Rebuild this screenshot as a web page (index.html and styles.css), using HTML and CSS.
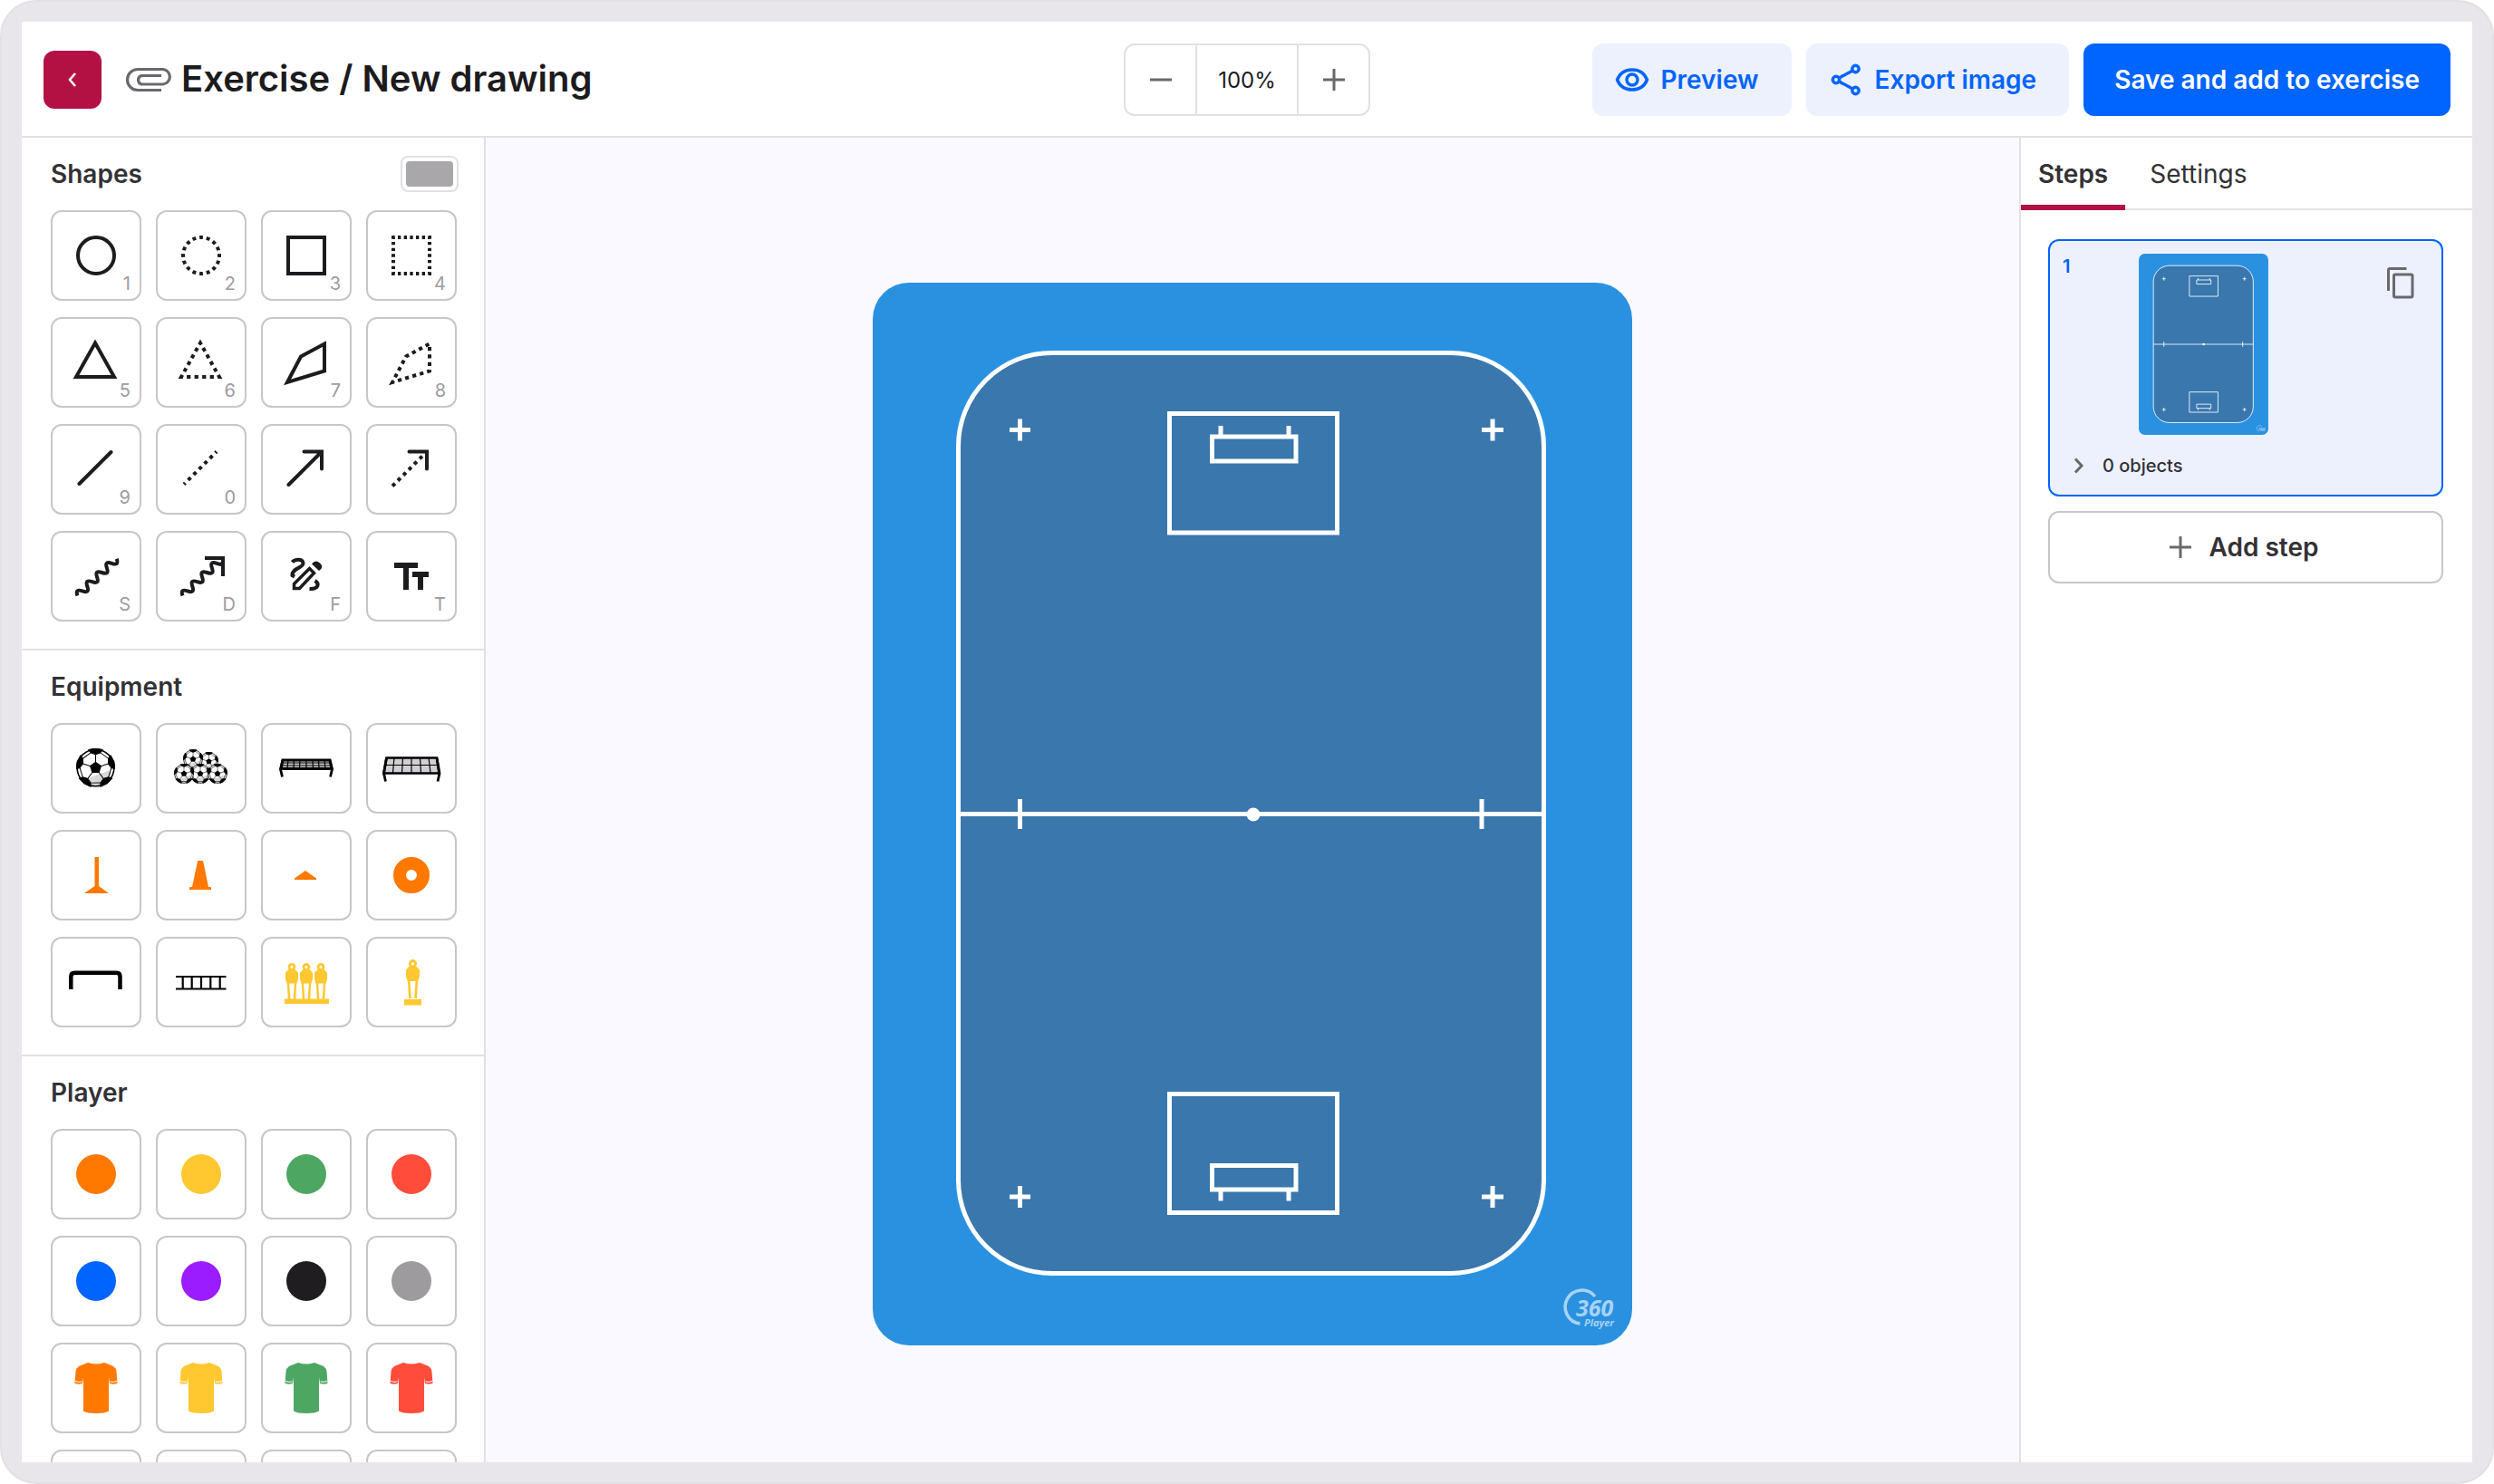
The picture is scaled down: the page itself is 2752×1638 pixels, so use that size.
FILE: index.html
```html
<!DOCTYPE html>
<html lang="en">
<head>
<meta charset="utf-8">
<meta name="viewport" content="width=device-width, initial-scale=1">
<title>Exercise / New drawing</title>
<link rel="stylesheet" href="styles.css">
</head>
<body>
<svg class="sprite" aria-hidden="true">
  <symbol id="ball" viewBox="-22 -22 44 44">
    <circle r="21" fill="#fff"/>
    <path d="M-7 11L15 3L18 6L15 14L6 20L-6 20Z" fill="#d9d7db"/>
    <path d="M0-7L6.700-2.200L4.100 5.700L-4.100 5.700L-6.700-2.200Z" fill="#000"/>
    <g id="seg" stroke="#000" stroke-width="1"><path d="M0-6V-15"/><path d="M0-15L-5.500-17L-8-20.500L0-22L8-20.500L5.500-17Z"/><path d="M5.500-17L14.500-10.500"/></g>
    <use href="#seg" transform="rotate(72)"/><use href="#seg" transform="rotate(144)"/><use href="#seg" transform="rotate(216)"/><use href="#seg" transform="rotate(288)"/>
    <circle r="20.800" fill="none" stroke="#000" stroke-width="1.600"/>
  </symbol>
  <symbol id="dummy" viewBox="-10 0 20 48">
    <path fill-rule="evenodd" d="M0 0a4.500 4.500 0 0 1 3.600 7.300L7.500 11.500V19L5.500 25L4.500 43H1.700L3 24H-3L-1.700 43H-4.500L-5.500 25L-7.500 19V11.500L-3.600 7.300A4.500 4.500 0 0 1 0 0ZM0 3a1.700 1.700 0 1 0 0 3.400A1.700 1.700 0 0 0 0 3Z"/>
  </symbol>
  <symbol id="shirt" viewBox="2 2 96 96">
    <path d="M41 22Q50 25 59 22L69 26Q72 28 72.500 32L73.500 45Q69 46.500 65 45L64 38V75.500Q60 78 50 78T36 75.500V38L35 45Q31 46.500 26.500 45L27.500 32Q28 28 31 26Z"/>
    <path d="M27 42.500Q31 44 34.500 43M73 42.500Q69 44 65.500 43" fill="none" stroke="#fff" stroke-width="1"/>
  </symbol>
  <symbol id="dot" viewBox="2 2 96 96"><circle cx="50" cy="50" r="22"/></symbol>
  <symbol id="pitch" viewBox="0 0 838 1173">
    <rect width="838" height="1173" rx="40" fill="#2a91e1"/>
    <g fill="none" stroke="#fff" stroke-width="5">
      <rect x="94.500" y="77.500" width="646" height="1016" rx="103" fill="#3977ad"/>
      <path d="M94 586.500H741M162.500 570V603M672 570V603"/>
      <path d="M151 162.500H174M162.500 150.500V174.500M672 162.500H696M684 150.500V174.500M151 1009H174M162.500 997V1021M672 1009H696M684 997V1021"/>
      <path d="M327.500 144.500H512.500V276H327.500ZM374.500 170H467V197H374.500ZM384 158V170M459 158V170"/>
      <path d="M327.500 895.500H512.500V1026.500H327.500ZM374.500 974.500H467V1001H374.500ZM384 1001V1013.500M459 1001V1013.500"/>
    </g>
    <circle cx="420" cy="587" r="7.500" fill="#fff"/>
    <path d="M797 1119A18.500 18.500 0 1 0 780.500 1149" fill="none" stroke="#a9d3f3" stroke-width="3.500"/>
    <text class="logo-360" x="776" y="1141">360</text>
    <text class="logo-player" x="785" y="1152">Player</text>
  </symbol>
</svg>

<div class="frame">
<div class="app">
  <header class="topbar">
    <div class="topbar-left">
      <button class="back" aria-label="Back"><svg viewBox="0 0 64 64"><path d="M35 25L29 32L35 39" fill="none" stroke="#fff" stroke-width="2.500"/></svg></button>
      <svg class="clip" viewBox="0 0 52 28" aria-hidden="true"><path d="M40 25.500H14A11.500 11.500 0 0 1 14 2.500H42A8.300 8.300 0 0 1 42 19H18A5 5 0 0 1 18 9.500H40" fill="none" stroke="#6a686c" stroke-width="3.200"/></svg>
      <h1>Exercise / New drawing</h1>
    </div>
    <div class="zoom" role="group" aria-label="Zoom">
      <button aria-label="Zoom out"><svg viewBox="0 0 24 24"><path d="M0 12H24"/></svg></button>
      <output>100%</output>
      <button aria-label="Zoom in"><svg viewBox="0 0 24 24"><path d="M0 12H24M12 0V24"/></svg></button>
    </div>
    <div class="actions">
      <button class="btn soft"><svg viewBox="0 0 40 40"><path d="M3.500 20C6.500 12.500 12.500 9 20 9S33.500 12.500 36.500 20C33.500 27.500 27.500 31 20 31S6.500 27.500 3.500 20Z"/><circle cx="20" cy="20" r="6"/></svg>Preview</button>
      <button class="btn soft"><svg viewBox="0 0 40 40"><circle cx="30.500" cy="8" r="3.700"/><circle cx="9" cy="20" r="3.700"/><circle cx="30.500" cy="32" r="3.700"/><path d="M12.300 18L27.300 10M12.300 22L27.300 30"/></svg>Export image</button>
      <button class="btn primary">Save and add to exercise</button>
    </div>
  </header>

  <div class="body">
    <aside class="tools">
      <section>
        <div class="head"><h2>Shapes</h2><input type="color" value="#a9a7aa" aria-label="Shape colour"></div>
        <div class="grid shapes">
          <button aria-label="Circle"><svg viewBox="2 2 96 96"><circle cx="50" cy="50" r="20"/></svg><kbd>1</kbd></button>
          <button aria-label="Dotted circle"><svg viewBox="2 2 96 96"><circle cx="50" cy="50" r="20" pathLength="128" stroke-dasharray="4 4" stroke-dashoffset="2"/></svg><kbd>2</kbd></button>
          <button aria-label="Square"><svg viewBox="2 2 96 96"><path d="M30 30H70V70H30Z"/></svg><kbd>3</kbd></button>
          <button aria-label="Dotted square"><svg viewBox="2 2 96 96"><path d="M30 30H70V70H30Z" pathLength="168" stroke-dasharray="3.500 3.500" stroke-dashoffset="1.750"/></svg><kbd>4</kbd></button>
          <button aria-label="Triangle"><svg viewBox="2 2 96 96"><path d="M49 28.500L70 66H28Z"/></svg><kbd>5</kbd></button>
          <button aria-label="Dotted triangle"><svg viewBox="2 2 96 96"><path d="M49 28.500L70 66H28Z" pathLength="120" stroke-dasharray="4 4" stroke-dashoffset="2"/></svg><kbd>6</kbd></button>
          <button aria-label="Polygon"><svg viewBox="2 2 96 96"><path d="M29 72L44 43.500L70 29.500V59.500Z"/></svg><kbd>7</kbd></button>
          <button aria-label="Dotted polygon"><svg viewBox="2 2 96 96"><path d="M29 72L44 43.500L70 29.500V59.500Z" pathLength="128" stroke-dasharray="4 4" stroke-dashoffset="2"/></svg><kbd>8</kbd></button>
          <button aria-label="Line"><svg viewBox="2 2 96 96"><path d="M31.500 66L66.500 31" stroke-linecap="round"/></svg><kbd>9</kbd></button>
          <button aria-label="Dotted line"><svg viewBox="2 2 96 96"><path d="M31 66.500L67 30.500" stroke-dasharray="4 4.500" stroke-dashoffset="2"/></svg><kbd>0</kbd></button>
          <button aria-label="Arrow"><svg viewBox="2 2 96 96"><path d="M30.500 67L66 31.500M47.500 30.500H67V49.500" stroke-linecap="round"/></svg></button>
          <button aria-label="Dotted arrow"><svg viewBox="2 2 96 96"><path d="M29 68.500L64 33.500" stroke-dasharray="4 4.500"/><path d="M47.500 30.500H67V49.500" stroke-linecap="round"/></svg></button>
          <button aria-label="Wavy line"><svg viewBox="2 2 96 96"><path d="M29.500 71.500q-2.900-8 5.400-5.100t5.400-5.100t5.400-5.100t5.400-5.100t5.400-5.100t5.400-5.100t5.400-5.100t5.400-5.100"/></svg><kbd>S</kbd></button>
          <button aria-label="Wavy arrow"><svg viewBox="2 2 96 96"><path d="M29.500 71.500q-2.900-8 5.400-5.100t5.400-5.100t5.400-5.100t5.400-5.100t5.400-5.100t5.400-5.100t5.400-5.100t4-1M54 30H74V50"/></svg><kbd>D</kbd></button>
          <button aria-label="Freehand"><svg viewBox="2 2 96 96"><path d="M34.500 34.500C37 31 46 30 46.500 35.500C47 41 34 41 34.500 49L37 50.500M59.500 55C64.500 58 64 64.500 53.500 64"/><path d="M53.500 41.500L36.500 58.500V63.500H42.500L58.500 46.500Z" stroke-width="3.500"/><path d="M56 36.500Q60 31 65 35.500T64 44Z" fill="#1c1b1e" stroke="none"/></svg><kbd>F</kbd></button>
          <button aria-label="Text"><svg viewBox="2 2 96 96"><path d="M31 38H57M44 38V65M51 48H69M60 48V65" stroke-width="6"/></svg><kbd>T</kbd></button>
        </div>
      </section>
      <section>
        <div class="head"><h2>Equipment</h2></div>
        <div class="grid">
          <button aria-label="Ball"><svg viewBox="2 2 96 96"><use href="#ball" x="28" y="28" width="43" height="43"/></svg></button>
          <button aria-label="Balls"><svg viewBox="2 2 96 96"><use href="#ball" x="48" y="32" width="21" height="21"/><use href="#ball" x="30" y="29" width="22" height="22"/><use href="#ball" x="38" y="45" width="22" height="22"/><use href="#ball" x="20" y="45" width="22" height="22"/><use href="#ball" x="57" y="45" width="22" height="22"/></svg></button>
          <button aria-label="Small goal"><svg viewBox="2 2 96 96" fill="none" stroke="#000"><path d="M24 41H76L78 50.500H22Z" fill="#c9c7cb" stroke-width="3"/><path d="M23 44H77M23 47H77M30 41L29 50M36.500 41L36 50M43 41L42.500 50M50 41V50M57 41L57.500 50M63.500 41L64 50M70 41L71 50" stroke-width="1.200"/><path d="M24 41L21.500 51L23.500 59.500M76 41L78.500 51L76.500 59.500" stroke-width="2.800"/></svg></button>
          <button aria-label="Large goal"><svg viewBox="2 2 96 96" fill="none" stroke="#000"><path d="M22.500 38.500H78L80.500 55.500H19.500Z" fill="#d1cfd3" stroke-width="2.600"/><path d="M21 46.500H79M31 38L29.500 55M40.500 38L39.500 55M50 38V55M59.500 38L60.500 55M69 38L71 55" stroke-width="1.200"/><path d="M22.500 38.500L19.500 55.500L21.500 64.500M78 38.500L81 55.500L79 64.500" stroke-width="2.800"/></svg></button>
          <button aria-label="Pole"><svg viewBox="2 2 96 96" fill="#ff7800"><path d="M48.500 30H53V62L64 70H37L48.500 62Z"/></svg></button>
          <button aria-label="Cone"><svg viewBox="2 2 96 96" fill="#ff7800"><path d="M46 35Q46 34 47 34H51Q52 34 52.300 35L58 63H60Q61 63 61 64V66H37V64Q37 63 38 63H40Z"/></svg></button>
          <button aria-label="Marker"><svg viewBox="2 2 96 96" fill="#ff7800"><path d="M49 45L61 53.500V55H37V53.500Z"/></svg></button>
          <button aria-label="Ring"><svg viewBox="2 2 96 96" fill="none" stroke="#ff7800" stroke-width="14"><circle cx="50" cy="50" r="13"/></svg></button>
          <button aria-label="Hurdle"><svg viewBox="2 2 96 96" fill="none" stroke="#000" stroke-width="4.500"><path d="M22.300 58V44Q22.300 39.800 26.500 39.800H72.500Q76.500 39.800 76.500 44V58"/></svg></button>
          <button aria-label="Ladder"><svg viewBox="2 2 96 96" fill="none" stroke="#000" stroke-width="2.200"><path d="M22 44H77.500M22 57.500H77.500M29.700 44V57.500M39.700 44V57.500M50 44V57.500M60.300 44V57.500M70.700 44V57.500"/></svg></button>
          <button aria-label="Mannequin wall"><svg viewBox="2 2 96 96" fill="#ffc831"><use href="#dummy" x="24" y="29" width="20" height="45"/><use href="#dummy" x="40" y="29" width="20" height="45"/><use href="#dummy" x="56" y="29" width="20" height="45"/><path d="M26 68.500H75V74H26Z"/></svg></button>
          <button aria-label="Mannequin"><svg viewBox="2 2 96 96" fill="#ffc831"><use href="#dummy" x="41.500" y="24" width="20" height="50"/><path d="M42 69H61V75.500H42Z"/></svg></button>
        </div>
      </section>
      <section>
        <div class="head"><h2>Player</h2></div>
        <div class="grid">
          <button class="orange" aria-label="Orange player"><svg><use href="#dot"/></svg></button>
          <button class="yellow" aria-label="Yellow player"><svg><use href="#dot"/></svg></button>
          <button class="green" aria-label="Green player"><svg><use href="#dot"/></svg></button>
          <button class="red" aria-label="Red player"><svg><use href="#dot"/></svg></button>
          <button class="blue" aria-label="Blue player"><svg><use href="#dot"/></svg></button>
          <button class="purple" aria-label="Purple player"><svg><use href="#dot"/></svg></button>
          <button class="black" aria-label="Black player"><svg><use href="#dot"/></svg></button>
          <button class="grey" aria-label="Grey player"><svg><use href="#dot"/></svg></button>
          <button class="orange" aria-label="Orange shirt"><svg><use href="#shirt"/></svg></button>
          <button class="yellow" aria-label="Yellow shirt"><svg><use href="#shirt"/></svg></button>
          <button class="green" aria-label="Green shirt"><svg><use href="#shirt"/></svg></button>
          <button class="red" aria-label="Red shirt"><svg><use href="#shirt"/></svg></button>
          <button class="blue" aria-label="Blue shirt"><svg><use href="#shirt"/></svg></button>
          <button class="purple" aria-label="Purple shirt"><svg><use href="#shirt"/></svg></button>
          <button class="black" aria-label="Black shirt"><svg><use href="#shirt"/></svg></button>
          <button class="grey" aria-label="Grey shirt"><svg><use href="#shirt"/></svg></button>
        </div>
      </section>
    </aside>

    <main class="canvas">
      <svg viewBox="0 0 838 1173" role="img" aria-label="Floorball rink"><use href="#pitch"/></svg>
    </main>

    <aside class="panel">
      <div class="tabs" role="tablist">
        <button role="tab" aria-selected="true">Steps</button>
        <button role="tab" aria-selected="false">Settings</button>
      </div>
      <div class="steps">
        <article class="step">
          <div class="step-top">
            <span class="num">1</span>
            <svg class="thumb" viewBox="0 0 838 1173" role="img" aria-label="Step 1"><use href="#pitch"/></svg>
            <button class="copy" aria-label="Duplicate step"><svg viewBox="0 0 40 40"><path d="M7.500 29V6Q7.500 4.500 9 4.500H27.500"/><rect x="13.500" y="11" width="20.500" height="25" rx="1.500"/></svg></button>
          </div>
          <button class="objects"><svg viewBox="0 0 12 20"><path d="M2 2.500L9 10L2 17.500"/></svg>0 objects</button>
        </article>
        <button class="add"><svg viewBox="0 0 24 24"><path d="M0 12H24M12 0V24"/></svg>Add step</button>
      </div>
    </aside>
  </div>
</div>
</div>
</body>
</html>
```
FILE: styles.css
```css
* { box-sizing: border-box; }

body {
  margin: 0;
  background: #fff;
  color: #333135;
  font-family: Inter, "Liberation Sans", sans-serif;
  font-size: 28px;
}

button {
  margin: 0;
  padding: 0;
  border: 0;
  background: none;
  color: inherit;
  font: inherit;
  cursor: pointer;
}

h1, h2 { margin: 0; font-weight: 600; }
svg { display: block; }
.sprite { position: absolute; width: 0; height: 0; }

.frame {
  height: 100vh;
  padding: 22px;
  border: 2px solid #e2e0e4;
  border-radius: 40px;
  background: #e8e6ea;
}

.app {
  display: flex;
  flex-direction: column;
  height: 100%;
  background: #fff;
}

/* Top bar */
.topbar {
  display: grid;
  grid-template-columns: 1fr auto 1fr;
  align-items: center;
  height: 128px;
  flex: none;
  padding: 2px 24px 0;
  border-bottom: 2px solid #e2e0e4;
}
.topbar-left { display: flex; align-items: center; }
.back {
  width: 64px;
  height: 64px;
  border-radius: 12px;
  background: #b31143;
}
.clip { width: 52px; height: 28px; margin: 0 10px 0 26px; }
h1 { padding-bottom: 2px; font-size: 40px; line-height: 48px; color: #1c1b1e; }

.zoom {
  display: flex;
  height: 80px;
  border: 2px solid #e2e0e4;
  border-radius: 12px;
}
.zoom button { display: grid; place-items: center; width: 77px; }
.zoom svg, .add svg {
  width: 24px;
  height: 24px;
  stroke: #6a686c;
  stroke-width: 3;
}
.zoom output {
  display: grid;
  place-items: center;
  width: 114px;
  border: solid #e2e0e4;
  border-width: 0 2px;
  color: #1c1b1e;
  font-size: 24px;
}

.actions { display: flex; justify-content: flex-end; gap: 16px; }
.btn {
  display: flex;
  align-items: center;
  gap: 12px;
  height: 80px;
  padding: 0 34px;
  border-radius: 12px;
  font-weight: 600;
  white-space: nowrap;
}
.btn svg {
  width: 40px;
  height: 40px;
  fill: none;
  stroke: #0064ff;
  stroke-width: 3.4;
}
.soft { padding: 0 36px 0 24px; background: #edf1fe; color: #0064ff; }
.primary { background: #0064ff; color: #fff; }

.body { display: flex; flex: 1; min-height: 0; }

/* Tool palette */
.tools {
  flex: none;
  width: 512px;
  overflow-y: auto;
  scrollbar-width: none;
  border-right: 2px solid #e2e0e4;
}
.tools section { padding: 0 28px 30px 32px; border-bottom: 2px solid #e2e0e4; }
.head {
  display: flex;
  align-items: center;
  justify-content: space-between;
  height: 80px;
}
h2 { font-size: 28px; line-height: 36px; }
.head input {
  width: 64px;
  height: 40px;
  padding: 4px;
  border: 2px solid #e2e0e4;
  border-radius: 8px;
  background: #fff;
}
.head input::-webkit-color-swatch-wrapper { padding: 0; }
.head input::-webkit-color-swatch { border: 0; border-radius: 4px; }

.grid {
  display: grid;
  grid-template-columns: repeat(4, 100px);
  gap: 18px 16px;
}
.grid button {
  position: relative;
  height: 100px;
  border: 2px solid #c8c6ca;
  border-radius: 12px;
}
.grid svg { width: 96px; height: 96px; }
.shapes svg { fill: none; stroke: #1c1b1e; stroke-width: 4; }
kbd {
  position: absolute;
  right: 10px;
  bottom: 5px;
  color: #9d9b9f;
  font: 20px/24px Inter, "Liberation Sans", sans-serif;
}
.orange { fill: #ff7800; }
.yellow { fill: #ffc831; }
.green { fill: #4ea663; }
.red { fill: #ff4c3b; }
.blue { fill: #0064ff; }
.purple { fill: #9b1cff; }
.black { fill: #1f1d20; }
.grey { fill: #9d9b9e; }

/* Canvas */
.canvas {
  flex: 1;
  min-width: 0;
  padding: 160px 32px 129px;
  background: #faf9ff;
}
.canvas svg { width: 100%; height: 100%; }
.logo-360, .logo-player {
  fill: #a9d3f3;
  font-family: "Open Sans", sans-serif;
  font-style: italic;
  font-weight: 700;
}
.logo-360 { font-size: 25px; }
.logo-player { font-size: 11px; }

/* Steps panel */
.panel { flex: none; width: 500px; border-left: 2px solid #e2e0e4; }
.tabs {
  display: flex;
  gap: 8px;
  height: 80px;
  box-shadow: inset 0 -2px #e2e0e4;
}
.tabs button { padding: 0 19px; }
.tabs button[aria-selected="true"] {
  box-shadow: inset 0 -6px #b31143;
  font-weight: 600;
}
.steps {
  display: flex;
  flex-direction: column;
  gap: 16px;
  padding: 32px 32px 32px 30px;
}
.step {
  height: 284px;
  padding: 14px;
  border: 2px solid #0064ff;
  border-radius: 12px;
  background: #edf1fe;
}
.step-top {
  display: grid;
  grid-template-columns: 84px 143px 1fr;
  align-items: start;
}
.num {
  color: #0064ff;
  font-size: 20px;
  font-weight: 600;
  line-height: 28px;
}
.thumb { width: 143px; height: 200px; }
.copy { justify-self: end; margin: 12px 12px 0 0; }
.copy svg {
  width: 40px;
  height: 40px;
  fill: none;
  stroke: #6a686c;
  stroke-width: 3;
}
.objects {
  display: flex;
  align-items: center;
  gap: 20px;
  height: 68px;
  padding-left: 12px;
  font-size: 20px;
  font-weight: 500;
}
.objects svg {
  width: 12px;
  height: 20px;
  fill: none;
  stroke: #6a686c;
  stroke-width: 3;
}
.add {
  display: flex;
  align-items: center;
  justify-content: center;
  gap: 20px;
  height: 80px;
  padding-right: 4px;
  border: 2px solid #c8c6ca;
  border-radius: 12px;
  font-weight: 600;
}
```
